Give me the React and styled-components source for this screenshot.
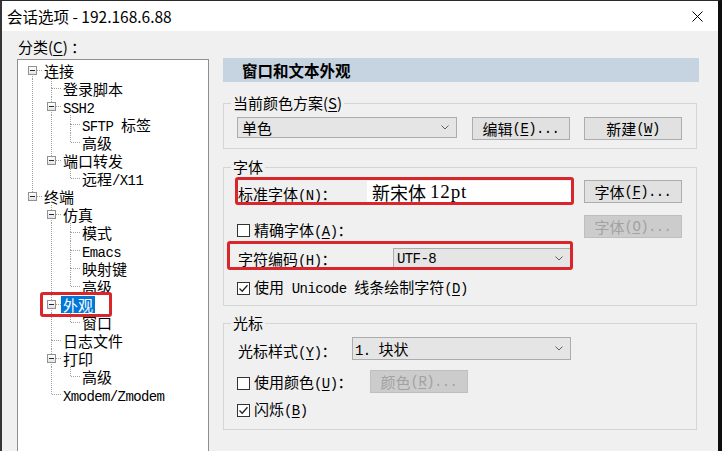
import React from 'react';
import styled, { createGlobalStyle, css } from 'styled-components';

const SANS = `"Noto Sans CJK SC", "Noto Sans", sans-serif`;
const SONG = `"Noto Sans CJK SC", sans-serif`;
const MONO = `"Liberation Mono", "DejaVu Sans Mono", monospace`;
const RED = '#d9262b';

const GlobalStyle = createGlobalStyle`
  html, body { margin: 0; padding: 0; background: #000; }
  body { width: 722px; height: 451px; overflow: hidden; }
  *, *::before, *::after { box-sizing: border-box; }
  #root { width: 722px; height: 451px; }
  u { text-underline-offset: 2px; }
`;

const Window = styled.div`
  width: 722px;
  height: 451px;
  display: flex;
  flex-direction: column;
  background: #f0f0f0;
  border-top: 1px solid #2a2a2a;
  border-left: 2px solid #353535;
  border-right: 4px solid #0d0d0d;
  overflow: hidden;
  color: #000;
`;

const TitleBar = styled.div`
  height: 30px;
  flex: none;
  background: #fff;
  display: flex;
  align-items: center;
  justify-content: space-between;
  padding: 0 15px 0 5px;
  font: 15.5px ${SANS};
`;

const Body = styled.div`
  flex: 1;
  display: flex;
  min-height: 0;
`;

const Sidebar = styled.div`
  width: 207px;
  flex: none;
  padding-left: 15px;
  display: flex;
  flex-direction: column;
`;

const CategoryLabel = styled.div`
  height: 20px;
  margin-top: 6px;
  margin-bottom: 2px;
  padding-left: 1px;
  font: 15px/20px ${SANS};
`;

const Tree = styled.div`
  flex: 1;
  background: #fff;
  border: 1px solid #8f8f8f;
  border-bottom: none;
  padding: 1px 0 0 5px;
  font: 15px ${SONG};
`;

const dotV = 'repeating-linear-gradient(to bottom, #a0a0a0 0 1px, transparent 1px 2px)';
const dotH = 'repeating-linear-gradient(to right, #a0a0a0 0 1px, transparent 1px 2px)';

const TreeRow = styled.div`
  display: flex;
  height: 18px;
  ${p => p.$marked && css`
    position: relative;
    &::after {
      content: '';
      position: absolute;
      left: 17px;
      top: -3px;
      width: 72px;
      height: 25px;
      border: 3px solid ${RED};
      border-radius: 3px;
      pointer-events: none;
    }
  `}
`;

const Guide = styled.span`
  width: 19px;
  flex: none;
  ${p => p.$on && css`background: ${dotV} 9px 0 / 1px 100% no-repeat;`}
`;

const NodeCell = styled.span`
  width: 19px;
  flex: none;
  display: flex;
  justify-content: center;
  align-items: flex-start;
  background: ${p => [
    p.$up && `${dotV} 9px 0 / 1px 9px no-repeat`,
    p.$down && `${dotV} 9px 9px / 1px 9px no-repeat`,
    `${dotH} 10px 9px / 9px 1px no-repeat`,
  ].filter(Boolean).join(', ')};
`;

const Expander = styled.span`
  width: 9px;
  height: 9px;
  margin-top: 5px;
  border: 1px solid #919191;
  background: linear-gradient(#ffffff, #e3e3e3);
  display: flex;
  align-items: center;
  justify-content: center;
  &::after {
    content: '';
    width: 5px;
    height: 1px;
    background: #2a2a2a;
  }
`;

const NodeText = styled.span`
  margin-top: 1px;
  height: 17px;
  line-height: 17px;
  padding: 0 2px;
  white-space: nowrap;
  ${p => p.$selected && css`
    background: #0078d7;
    color: #fff;
  `}
`;

const Panel = styled.div`
  width: 476px;
  flex: none;
  margin-left: 14px;
  padding-top: 27px;
  display: flex;
  flex-direction: column;
`;

const PanelHeader = styled.div`
  height: 24px;
  background: #c6d4e1;
  padding-left: 19px;
  font: bold 15.5px/24px ${SANS};
`;

const Group = styled.fieldset`
  width: 474px;
  min-width: 0;
  margin: ${p => p.$mt}px 0 0 0;
  padding: ${p => p.$pad};
  border: 1px solid #d5d5d5;
  display: flex;
  flex-direction: column;
`;

const Legend = styled.legend`
  padding: 0 2px;
  margin-left: -6px;
  font: 15px/16px ${SANS};
`;

const Row = styled.div`
  display: flex;
  align-items: ${p => p.$align || 'center'};
  height: ${p => p.$h}px;
  margin-top: ${p => p.$mt || 0}px;
  font: 15px ${SONG};
`;

const FieldLabel = styled.span`
  width: ${p => p.$w}px;
  flex: none;
  padding-left: 1px;
  margin-top: ${p => p.$drop || 0}px;
  white-space: nowrap;
  line-height: 18px;
`;

const Marked = styled.div`
  display: flex;
  align-items: center;
  align-self: stretch;
  position: relative;
  &::after {
    content: '';
    position: absolute;
    top: ${p => p.$box[0]}px;
    right: ${p => p.$box[1]}px;
    bottom: ${p => p.$box[2]}px;
    left: ${p => p.$box[3]}px;
    border: 3px solid ${RED};
    border-radius: 3px;
    pointer-events: none;
  }
`;

const TextField = styled.div`
  width: 204px;
  height: 22px;
  background: #fff;
  padding-left: 5px;
  display: flex;
  align-items: center;
  white-space: pre;
  font: 18px ${SONG};
`;

const BigMono = styled.span`
  font-family: "Liberation Serif", serif;
  font-size: 19px;
  letter-spacing: 0.8px;
`;

const Select = styled.div`
  width: ${p => p.$w}px;
  height: ${p => p.$h}px;
  flex: none;
  background: #e5e5e5;
  border: 1px solid #acacac;
  padding: 0 7px 0 ${p => p.$pl ?? 4}px;
  display: flex;
  align-items: center;
  justify-content: space-between;
  white-space: pre;
  font: 15px ${p => (p.$sans ? SANS : SONG)};
`;

const Button = styled.button`
  width: 98px;
  height: 23px;
  flex: none;
  margin: 0 0 0 ${p => (p.$ml === 'auto' ? 'auto' : `${p.$ml || 0}px`)};
  padding: 0;
  border: 1px solid #adadad;
  background: #e1e1e1;
  color: #000;
  display: flex;
  align-items: center;
  justify-content: center;
  white-space: pre;
  font: 15px ${SONG};
  &:disabled {
    background: #cccccc;
    border-color: #bfbfbf;
    color: #a2a2a2;
  }
`;

const Check = styled.label`
  display: flex;
  align-items: center;
  gap: 4px;
  flex: none;
  width: ${p => (p.$w ? `${p.$w}px` : 'auto')};
  margin-top: ${p => p.$drop || 0}px;
  white-space: pre;
  line-height: 18px;
`;

const CheckBox = styled.span`
  width: 13px;
  height: 13px;
  flex: none;
  border: 1px solid #333;
  background: #fff;
  display: flex;
  align-items: center;
  justify-content: center;
`;

const Mono = styled.span`
  font-family: ${MONO};
  font-size: 14px;
  letter-spacing: -0.6px;
`;

function withAmp(p) {
  const i = p.indexOf('&');
  if (i < 0) return p;
  return (
    <>
      {p.slice(0, i)}
      <u>{p[i + 1]}</u>
      {p.slice(i + 2)}
    </>
  );
}

function Txt({ s }) {
  const parts = s.split(/([\x20-\x7e]+)/).filter(Boolean);
  return parts.map((p, i) =>
    /^[\x20-\x7e]+$/.test(p) ? (
      <Mono key={i}>{withAmp(p)}</Mono>
    ) : (
      <React.Fragment key={i}>{p}</React.Fragment>
    )
  );
}

const Chevron = () => (
  <svg width="8" height="5" viewBox="0 0 8 5">
    <polyline points="0.5,0.5 4,4 7.5,0.5" fill="none" stroke="#606060" strokeWidth="1" />
  </svg>
);

const CloseIcon = () => (
  <svg width="11" height="11" viewBox="0 0 11 11">
    <path d="M0.5 0.5 L10.5 10.5 M10.5 0.5 L0.5 10.5" stroke="#000" strokeWidth="1" fill="none" />
  </svg>
);

const CheckMark = () => (
  <svg width="11" height="11" viewBox="0 0 11 11">
    <polyline points="1.5,5.5 4.2,8.2 9.5,2.2" fill="none" stroke="#222" strokeWidth="1.3" />
  </svg>
);

function CheckItem({ checked, s, w, drop }) {
  return (
    <Check $w={w} $drop={drop}>
      <CheckBox>{checked && <CheckMark />}</CheckBox>
      <span><Txt s={s} /></span>
    </Check>
  );
}

const TREE = [
  {
    t: '连接',
    c: [
      { t: '登录脚本' },
      { t: 'SSH2', c: [{ t: 'SFTP 标签' }, { t: '高级' }] },
      { t: '端口转发', c: [{ t: '远程/X11' }] },
    ],
  },
  {
    t: '终端',
    c: [
      { t: '仿真', c: [{ t: '模式' }, { t: 'Emacs' }, { t: '映射键' }, { t: '高级' }] },
      { t: '外观', sel: true, c: [{ t: '窗口' }] },
      { t: '日志文件' },
      { t: '打印', c: [{ t: '高级' }] },
      { t: 'Xmodem/Zmodem' },
    ],
  },
];

function flatten(nodes, depth = 0, guides = [], out = []) {
  nodes.forEach((n, i) => {
    const last = i === nodes.length - 1;
    out.push({ ...n, depth, guides, up: !(depth === 0 && i === 0), down: !last });
    if (n.c) flatten(n.c, depth + 1, [...guides, !last], out);
  });
  return out;
}

const ROWS = flatten(TREE);

export default function App() {
  return (
    <>
      <GlobalStyle />
      <Window>
        <TitleBar>
          <span>会话选项 - 192.168.6.88</span>
          <CloseIcon />
        </TitleBar>
        <Body>
          <Sidebar>
            <CategoryLabel>分类(<u>C</u>) ：</CategoryLabel>
            <Tree>
              {ROWS.map((r, i) => (
                <TreeRow key={i} $marked={r.sel}>
                  {r.guides.map((g, j) => (
                    <Guide key={j} $on={g} />
                  ))}
                  <NodeCell $up={r.up} $down={r.down}>
                    {r.c && <Expander />}
                  </NodeCell>
                  <NodeText $selected={r.sel}>
                    <Txt s={r.t} />
                  </NodeText>
                </TreeRow>
              ))}
            </Tree>
          </Sidebar>

          <Panel>
            <PanelHeader>窗口和文本外观</PanelHeader>

            <Group $mt={13} $pad="6px 14px 8px 13px">
              <Legend>当前颜色方案(<u>S</u>)</Legend>
              <Row $h={23} $align="flex-start">
                <Select $w={220} $h={21} $sans>
                  <span>单色</span>
                  <Chevron />
                </Select>
                <Button $ml={15}><Txt s="编辑(&E)..." /></Button>
                <Button $ml={14}><Txt s="新建(&W)" /></Button>
              </Row>
            </Group>

            <Group $mt={10} $pad="5px 14px 8px 13px">
              <Legend>字体</Legend>
              <Row $h={23}>
                <Marked $box={[-3, -3, -2, -2]}>
                  <FieldLabel $w={130} $drop={6}><Txt s="标准字体(&N)：" /></FieldLabel>
                  <TextField>新宋体 <BigMono>12pt</BigMono></TextField>
                </Marked>
                <Button $ml={13}><Txt s="字体(&F)..." /></Button>
              </Row>
              <Row $h={23} $mt={12}>
                <CheckItem s="精确字体(&A)：" drop={8} />
                <Button $ml="auto" disabled><Txt s="字体(&O)..." /></Button>
              </Row>
              <Row $h={21} $mt={10}>
                <Marked $box={[-7, -2, -1, -10]}>
                  <FieldLabel $w={156} $drop={3}><Txt s="字符编码(&H)：" /></FieldLabel>
                  <Select $w={178} $h={21} $pl={3}>
                    <Txt s="UTF-8" />
                    <Chevron />
                  </Select>
                </Marked>
              </Row>
              <Row $h={18} $mt={10}>
                <CheckItem checked s="使用 Unicode 线条绘制字符(&D)" />
              </Row>
            </Group>

            <Group $mt={9} $pad="6px 14px 10px 13px">
              <Legend>光标</Legend>
              <Row $h={23}>
                <FieldLabel $w={115} $drop={7}><Txt s="光标样式(&Y)：" /></FieldLabel>
                <Select $w={219} $h={23} $pl={2}>
                  <span><Txt s="1. 块状" /></span>
                  <Chevron />
                </Select>
              </Row>
              <Row $h={23} $mt={10}>
                <CheckItem s="使用颜色(&U)：" w={133} drop={3} />
                <Button disabled><Txt s="颜色(&R)..." /></Button>
              </Row>
              <Row $h={18} $mt={8}>
                <CheckItem checked s="闪烁(&B)" />
              </Row>
            </Group>
          </Panel>
        </Body>
      </Window>
    </>
  );
}
